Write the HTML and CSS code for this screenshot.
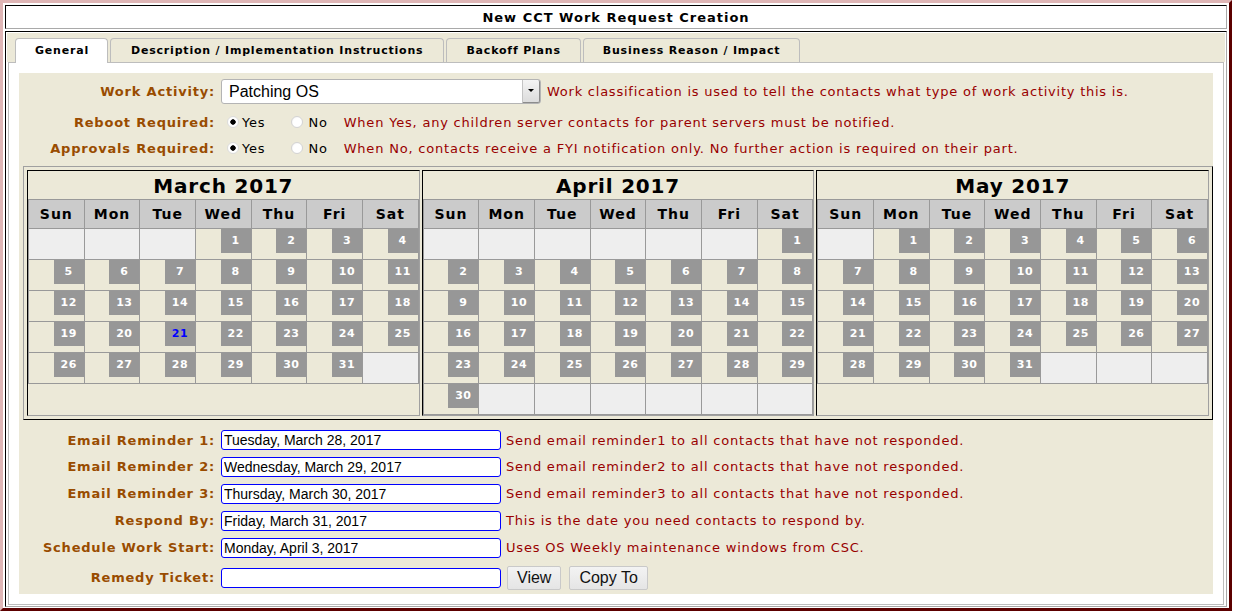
FILE: index.html
```html
<!DOCTYPE html>
<html>
<head>
<meta charset="utf-8">
<title>New CCT Work Request Creation</title>
<link rel="stylesheet" href="styles.css">
</head>
<body>
<div class="frame">
  <div class="title-cell">New CCT Work Request Creation</div>
  <div class="main-cell">
    <div class="tabbar">
      <div class="tab active">General</div>
      <div class="tab wide">Description / Implementation Instructions</div>
      <div class="tab">Backoff Plans</div>
      <div class="tab">Business Reason / Impact</div>
    </div>
    <div class="panel">
      <div class="content">
        <div class="toprows">
          <div class="lbl">Work Activity:</div>
          <div class="ctl">
            <span class="selectwrap"><select class="sel"><option>Patching OS</option></select><span class="selbtn"><span class="tri"></span></span></span>
            <span class="desc first">Work classification is used to tell the contacts what type of work activity this is.</span>
          </div>
          <div class="lbl">Reboot Required:</div>
          <div class="ctl">
            <input type="radio" class="radio" name="reboot" checked><span class="opt yes">Yes</span>
            <input type="radio" class="radio" name="reboot"><span class="opt no">No</span>
            <span class="desc">When Yes, any children server contacts for parent servers must be notified.</span>
          </div>
          <div class="lbl">Approvals Required:</div>
          <div class="ctl">
            <input type="radio" class="radio" name="appr" checked><span class="opt yes">Yes</span>
            <input type="radio" class="radio" name="appr"><span class="opt no">No</span>
            <span class="desc">When No, contacts receive a FYI notification only. No further action is required on their part.</span>
          </div>
        </div>

        <div class="cals">
          <div class="month">
            <div class="mtitle">March 2017</div>
            <div class="mgrid">
              <div class="h">Sun</div><div class="h">Mon</div><div class="h">Tue</div><div class="h">Wed</div><div class="h">Thu</div><div class="h">Fri</div><div class="h">Sat</div>
              <div class="e"></div><div class="e"></div><div class="e"></div><div class="d"><span>1</span></div><div class="d"><span>2</span></div><div class="d"><span>3</span></div><div class="d"><span>4</span></div>
              <div class="d"><span>5</span></div><div class="d"><span>6</span></div><div class="d"><span>7</span></div><div class="d"><span>8</span></div><div class="d"><span>9</span></div><div class="d"><span>10</span></div><div class="d"><span>11</span></div>
              <div class="d"><span>12</span></div><div class="d"><span>13</span></div><div class="d"><span>14</span></div><div class="d"><span>15</span></div><div class="d"><span>16</span></div><div class="d"><span>17</span></div><div class="d"><span>18</span></div>
              <div class="d"><span>19</span></div><div class="d"><span>20</span></div><div class="d"><span class="today">21</span></div><div class="d"><span>22</span></div><div class="d"><span>23</span></div><div class="d"><span>24</span></div><div class="d"><span>25</span></div>
              <div class="d"><span>26</span></div><div class="d"><span>27</span></div><div class="d"><span>28</span></div><div class="d"><span>29</span></div><div class="d"><span>30</span></div><div class="d"><span>31</span></div><div class="e"></div>
            </div>
          </div>
          <div class="month">
            <div class="mtitle">April 2017</div>
            <div class="mgrid">
              <div class="h">Sun</div><div class="h">Mon</div><div class="h">Tue</div><div class="h">Wed</div><div class="h">Thu</div><div class="h">Fri</div><div class="h">Sat</div>
              <div class="e"></div><div class="e"></div><div class="e"></div><div class="e"></div><div class="e"></div><div class="e"></div><div class="d"><span>1</span></div>
              <div class="d"><span>2</span></div><div class="d"><span>3</span></div><div class="d"><span>4</span></div><div class="d"><span>5</span></div><div class="d"><span>6</span></div><div class="d"><span>7</span></div><div class="d"><span>8</span></div>
              <div class="d"><span>9</span></div><div class="d"><span>10</span></div><div class="d"><span>11</span></div><div class="d"><span>12</span></div><div class="d"><span>13</span></div><div class="d"><span>14</span></div><div class="d"><span>15</span></div>
              <div class="d"><span>16</span></div><div class="d"><span>17</span></div><div class="d"><span>18</span></div><div class="d"><span>19</span></div><div class="d"><span>20</span></div><div class="d"><span>21</span></div><div class="d"><span>22</span></div>
              <div class="d"><span>23</span></div><div class="d"><span>24</span></div><div class="d"><span>25</span></div><div class="d"><span>26</span></div><div class="d"><span>27</span></div><div class="d"><span>28</span></div><div class="d"><span>29</span></div>
              <div class="d"><span>30</span></div><div class="e"></div><div class="e"></div><div class="e"></div><div class="e"></div><div class="e"></div><div class="e"></div>
            </div>
          </div>
          <div class="month">
            <div class="mtitle">May 2017</div>
            <div class="mgrid">
              <div class="h">Sun</div><div class="h">Mon</div><div class="h">Tue</div><div class="h">Wed</div><div class="h">Thu</div><div class="h">Fri</div><div class="h">Sat</div>
              <div class="e"></div><div class="d"><span>1</span></div><div class="d"><span>2</span></div><div class="d"><span>3</span></div><div class="d"><span>4</span></div><div class="d"><span>5</span></div><div class="d"><span>6</span></div>
              <div class="d"><span>7</span></div><div class="d"><span>8</span></div><div class="d"><span>9</span></div><div class="d"><span>10</span></div><div class="d"><span>11</span></div><div class="d"><span>12</span></div><div class="d"><span>13</span></div>
              <div class="d"><span>14</span></div><div class="d"><span>15</span></div><div class="d"><span>16</span></div><div class="d"><span>17</span></div><div class="d"><span>18</span></div><div class="d"><span>19</span></div><div class="d"><span>20</span></div>
              <div class="d"><span>21</span></div><div class="d"><span>22</span></div><div class="d"><span>23</span></div><div class="d"><span>24</span></div><div class="d"><span>25</span></div><div class="d"><span>26</span></div><div class="d"><span>27</span></div>
              <div class="d"><span>28</span></div><div class="d"><span>29</span></div><div class="d"><span>30</span></div><div class="d"><span>31</span></div><div class="e"></div><div class="e"></div><div class="e"></div>
            </div>
          </div>
        </div>

        <div class="formrows">
          <div class="lbl">Email Reminder 1:</div>
          <div class="ctl"><input class="txt" type="text" value="Tuesday, March 28, 2017"><span class="desc fdesc">Send email reminder1 to all contacts that have not responded.</span></div>
          <div class="lbl">Email Reminder 2:</div>
          <div class="ctl"><input class="txt" type="text" value="Wednesday, March 29, 2017"><span class="desc fdesc">Send email reminder2 to all contacts that have not responded.</span></div>
          <div class="lbl">Email Reminder 3:</div>
          <div class="ctl"><input class="txt" type="text" value="Thursday, March 30, 2017"><span class="desc fdesc">Send email reminder3 to all contacts that have not responded.</span></div>
          <div class="lbl">Respond By:</div>
          <div class="ctl"><input class="txt" type="text" value="Friday, March 31, 2017"><span class="desc fdesc">This is the date you need contacts to respond by.</span></div>
          <div class="lbl">Schedule Work Start:</div>
          <div class="ctl"><input class="txt" type="text" value="Monday, April 3, 2017"><span class="desc fdesc">Uses OS Weekly maintenance windows from CSC.</span></div>
          <div class="lbl">Remedy Ticket:</div>
          <div class="ctl"><input class="txt" type="text" value=""><button class="btn view">View</button><button class="btn copy">Copy To</button></div>
        </div>
      </div>
    </div>
  </div>
</div>
</body>
</html>
```

FILE: styles.css
```css
* { box-sizing: border-box; }

body {
  margin: 0;
  background: #fff;
  color: #000;
  font-family: "DejaVu Sans", Verdana, sans-serif;
  font-size: 13px;
  letter-spacing: 0.8px;
}

.frame {
  width: 1232px;
  height: 611px;
  border: 3px solid;
  border-color: #dfb6b6 #5c0000 #5c0000 #dfb6b6;
  padding: 2px;
  display: flex;
  flex-direction: column;
  gap: 2px;
}

.title-cell {
  height: 24px;
  border: 1px solid;
  border-color: #000 #a9a9a9 #a9a9a9 #000;
  text-align: center;
  font-weight: bold;
  font-size: 13px;
  letter-spacing: 1px;
  line-height: 24px;
}

.main-cell {
  flex: 1;
  border: 1px solid;
  border-color: #000 #a9a9a9 #a9a9a9 #000;
  padding: 1px;
  display: flex;
  flex-direction: column;
}

.tabbar {
  background: #ece9d8;
  height: 29px;
  padding: 5px 8px 0 8px;
  display: flex;
  align-items: flex-end;
  gap: 2px;
}

.tab {
  height: 24px;
  padding: 0 19px;
  border: 1px solid #bdbdbd;
  border-bottom: none;
  border-radius: 4px 4px 0 0;
  background: #ece9d8;
  font-weight: bold;
  font-size: 11px;
  letter-spacing: 0.8px;
  line-height: 24px;
  white-space: nowrap;
}

.tab.wide { padding: 0 20px; }

.tab.active {
  background: #fff;
  height: 25px;
  margin-bottom: -1px;
  position: relative;
  z-index: 1;
  padding: 0 18px 0 19px;
}

.panel {
  flex: 1;
  margin: 0 1px;
  background: #fff;
  border: 1px solid #bdbdbd;
  padding: 10px;
  display: flex;
}

.content {
  flex: 1;
  background: #ece9d8;
  padding-top: 3px;
}

.toprows,
.formrows {
  display: grid;
  grid-template-columns: 196px auto;
  column-gap: 6px;
  align-items: center;
}

.toprows {
  grid-template-rows: 30px 32px 20px;
}

.formrows {
  margin-top: 7px;
  grid-template-rows: 26px 27px 27px 27px 27px 33px;
}

.lbl {
  text-align: right;
  color: #994c00;
  font-weight: bold;
  font-size: 13px;
  letter-spacing: 0.8px;
  white-space: nowrap;
}

.ctl {
  display: flex;
  align-items: center;
  white-space: nowrap;
}

.desc {
  color: #990000;
  font-size: 13px;
  letter-spacing: 0.8px;
}

.desc.first { margin-left: 6px; letter-spacing: 0.76px; }
.fdesc { margin-left: 5px; }

/* select */
.selectwrap {
  position: relative;
  display: inline-block;
  width: 320px;
  height: 25px;
}

.sel {
  appearance: none;
  -webkit-appearance: none;
  width: 320px;
  height: 25px;
  margin: 0;
  padding: 0 0 0 7px;
  border: 1px solid #b4b4b4;
  border-radius: 3px;
  background: #fff;
  color: #000;
  font-family: "Liberation Sans", Arial, sans-serif;
  font-size: 16px;
  letter-spacing: 0;
}

.selbtn {
  position: absolute;
  right: 1px;
  top: 1px;
  width: 18px;
  height: 23px;
  background: linear-gradient(#f4f4f4, #dcdcdc);
  border-left: 1px solid #c4c4c4;
  border-right: 1px solid #8c8c8c;
  border-bottom: 1px solid #8c8c8c;
  border-radius: 0 2px 2px 0;
  display: flex;
  align-items: center;
  justify-content: center;
}

.tri {
  width: 0;
  height: 0;
  border-left: 3px solid transparent;
  border-right: 3px solid transparent;
  border-top: 3px solid #000;
}

/* radios */
.radio {
  appearance: none;
  -webkit-appearance: none;
  width: 12px;
  height: 12px;
  margin: 0;
  border-radius: 50%;
  border: 1px solid #d4d4d4;
  background: radial-gradient(circle at 60% 60%, #fff 0 55%, #ececec 100%);
}

.radio:checked {
  background: radial-gradient(circle, #000 0 2.4px, #fff 3px);
  border-color: #dcdcdc;
}

.radio:first-child { margin-left: 6px; }

.opt { color: #000; }
.opt.yes { margin-left: 3px; margin-right: 26px; }
.opt.no { margin-left: 5px; margin-right: 16px; }

/* calendars */
.cals {
  margin: 8px 0 0 4px;
  width: 1190px;
  border: 1px solid;
  border-color: #a0a0a0 #000 #000 #a0a0a0;
  padding: 3px;
  display: flex;
  gap: 2px;
}

.month {
  flex: 1;
  height: 246px;
  border: 1px solid;
  border-color: #000 #a0a0a0 #a0a0a0 #000;
}

.mtitle {
  height: 28px;
  text-align: center;
  font-weight: bold;
  font-size: 20px;
  letter-spacing: 0.8px;
  line-height: 30px;
}

.mgrid {
  display: grid;
  grid-template-columns: repeat(7, 1fr);
  border-top: 1px solid #999;
  border-left: 1px solid #999;
}

.mgrid > div {
  border-right: 1px solid #999;
  border-bottom: 1px solid #999;
  height: 31px;
}

.mgrid > .h {
  height: 29px;
  background: #cbcbcb;
  text-align: center;
  font-weight: bold;
  font-size: 14px;
  letter-spacing: 1px;
  line-height: 28px;
}

.mgrid > .e { background: #eeeeee; }

.d span {
  display: block;
  width: 30px;
  height: 24px;
  margin-left: auto;
  background: #979797;
  color: #fff;
  text-align: center;
  font-weight: bold;
  font-size: 11px;
  letter-spacing: 0.5px;
  line-height: 24px;
}

.d span.today { color: #0000ff; }

/* form inputs */
.txt {
  width: 280px;
  height: 20px;
  margin: 0;
  padding: 0 2px;
  border: 1px solid #0000ff;
  border-radius: 3px;
  background: #fff;
  color: #000;
  font-family: "Liberation Sans", Arial, sans-serif;
  font-size: 14px;
  letter-spacing: 0;
  outline: none;
}

.btn {
  height: 24px;
  margin: 0;
  padding: 0 9px;
  border: 1px solid #c9c9c9;
  border-radius: 2px;
  background: linear-gradient(#f3f3f3, #e5e5e5);
  color: #111;
  font-family: "Liberation Sans", Arial, sans-serif;
  font-size: 16px;
  letter-spacing: 0;
}

.btn.view { margin-left: 6px; }
.btn.copy { margin-left: 8px; }
```
